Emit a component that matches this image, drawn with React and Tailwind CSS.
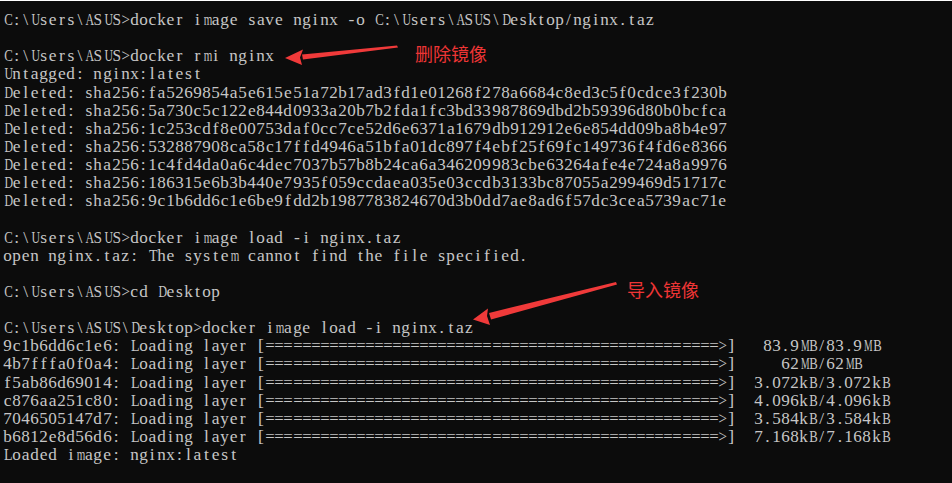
import { useMemo } from "react";

const BAR = "[" + "=".repeat(50) + ">]";
const CELL = 9.05;
const FONT = "17.5px 'Liberation Serif'";

const lines = [
  "C:\\Users\\ASUS>docker image save nginx -o C:\\Users\\ASUS\\Desktop/nginx.taz",
  "",
  "C:\\Users\\ASUS>docker rmi nginx",
  "Untagged: nginx:latest",
  "Deleted: sha256:fa5269854a5e615e51a72b17ad3fd1e01268f278a6684c8ed3c5f0cdce3f230b",
  "Deleted: sha256:5a730c5c122e844d0933a20b7b2fda1fc3bd33987869dbd2b59396d80b0bcfca",
  "Deleted: sha256:1c253cdf8e00753daf0cc7ce52d6e6371a1679db912912e6e854dd09ba8b4e97",
  "Deleted: sha256:532887908ca58c17ffd4946a51bfa01dc897f4ebf25f69fc149736f4fd6e8366",
  "Deleted: sha256:1c4fd4da0a6c4dec7037b57b8b24ca6a346209983cbe63264afe4e724a8a9976",
  "Deleted: sha256:186315e6b3b440e7935f059ccdaea035e03ccdb3133bc87055a299469d51717c",
  "Deleted: sha256:9c1b6dd6c1e6be9fdd2b1987783824670d3b0dd7ae8ad6f57dc3cea5739ac71e",
  "",
  "C:\\Users\\ASUS>docker image load -i nginx.taz",
  "open nginx.taz: The system cannot find the file specified.",
  "",
  "C:\\Users\\ASUS>cd Desktop",
  "",
  "C:\\Users\\ASUS\\Desktop>docker image load -i nginx.taz",
  `9c1b6dd6c1e6: Loading layer ${BAR}   83.9MB/83.9MB`,
  `4b7fffa0f0a4: Loading layer ${BAR}     62MB/62MB`,
  `f5ab86d69014: Loading layer ${BAR}  3.072kB/3.072kB`,
  `c876aa251c80: Loading layer ${BAR}  4.096kB/4.096kB`,
  `7046505147d7: Loading layer ${BAR}  3.584kB/3.584kB`,
  `b6812e8d56d6: Loading layer ${BAR}  7.168kB/7.168kB`,
  "Loaded image: nginx:latest",
];

// squeeze the proportional serif glyphs into fixed console cells
function useGlyphScale() {
  return useMemo(() => {
    const ctx = document.createElement("canvas").getContext("2d");
    ctx.font = FONT;
    const cache = {};
    return (ch) => {
      if (cache[ch] === undefined) {
        const w = ctx.measureText(ch).width;
        if (ch === "=") cache[ch] = w ? (CELL + 0.4) / w : 1;
        else cache[ch] = w > CELL - 0.5 ? (CELL - 0.5) / w : 1;
      }
      return cache[ch];
    };
  }, []);
}

function ConsoleLine({ text, scaleOf }) {
  return (
    <div className="flex h-[18.13px] items-center whitespace-pre">
      {Array.from(text).map((ch, i) => {
        const s = scaleOf(ch);
        return (
          <span
            key={i}
            className="inline-block w-[9.05px] shrink-0 text-center"
            style={s !== 1 ? { transform: `scaleX(${s})` } : undefined}
          >
            {ch === " " ? "\u00a0" : ch}
          </span>
        );
      })}
    </div>
  );
}

function Arrows() {
  return (
    <svg className="pointer-events-none absolute inset-0" width="952" height="483" viewBox="0 0 952 483" aria-hidden="true">
      <g fill="#f03a3a">
        <polygon points="397,44.5 398,46.5 303,58.5 302,53.5" />
        <polygon points="285,57 303,48.5 300,56.5 302,64" />
        <polygon points="616,281 617,283.5 491,318.5 489,312" />
        <polygon points="473,318.5 488,307.5 487,315 490,324" />
      </g>
    </svg>
  );
}

export default function App() {
  const scaleOf = useGlyphScale();

  return (
    <div className="relative h-[483px] w-[952px] overflow-hidden border-t border-white bg-[#0c0c0c]">
      <div className="px-[3px] pt-[9px] font-['Liberation_Serif',serif] text-[17.5px] leading-[18.13px] text-[#c6c6c6]">
        {lines.map((line, i) => (
          <ConsoleLine key={i} text={line} scaleOf={scaleOf} />
        ))}
      </div>
      <Arrows />
      <span className="absolute left-[415px] top-[41px] font-['Noto_Sans_CJK_SC',sans-serif] text-[18px] leading-[22px] text-[#ee3535]">
        删除镜像
      </span>
      <span className="absolute left-[627px] top-[277px] font-['Noto_Sans_CJK_SC',sans-serif] text-[18px] leading-[22px] text-[#ee3535]">
        导入镜像
      </span>
    </div>
  );
}
